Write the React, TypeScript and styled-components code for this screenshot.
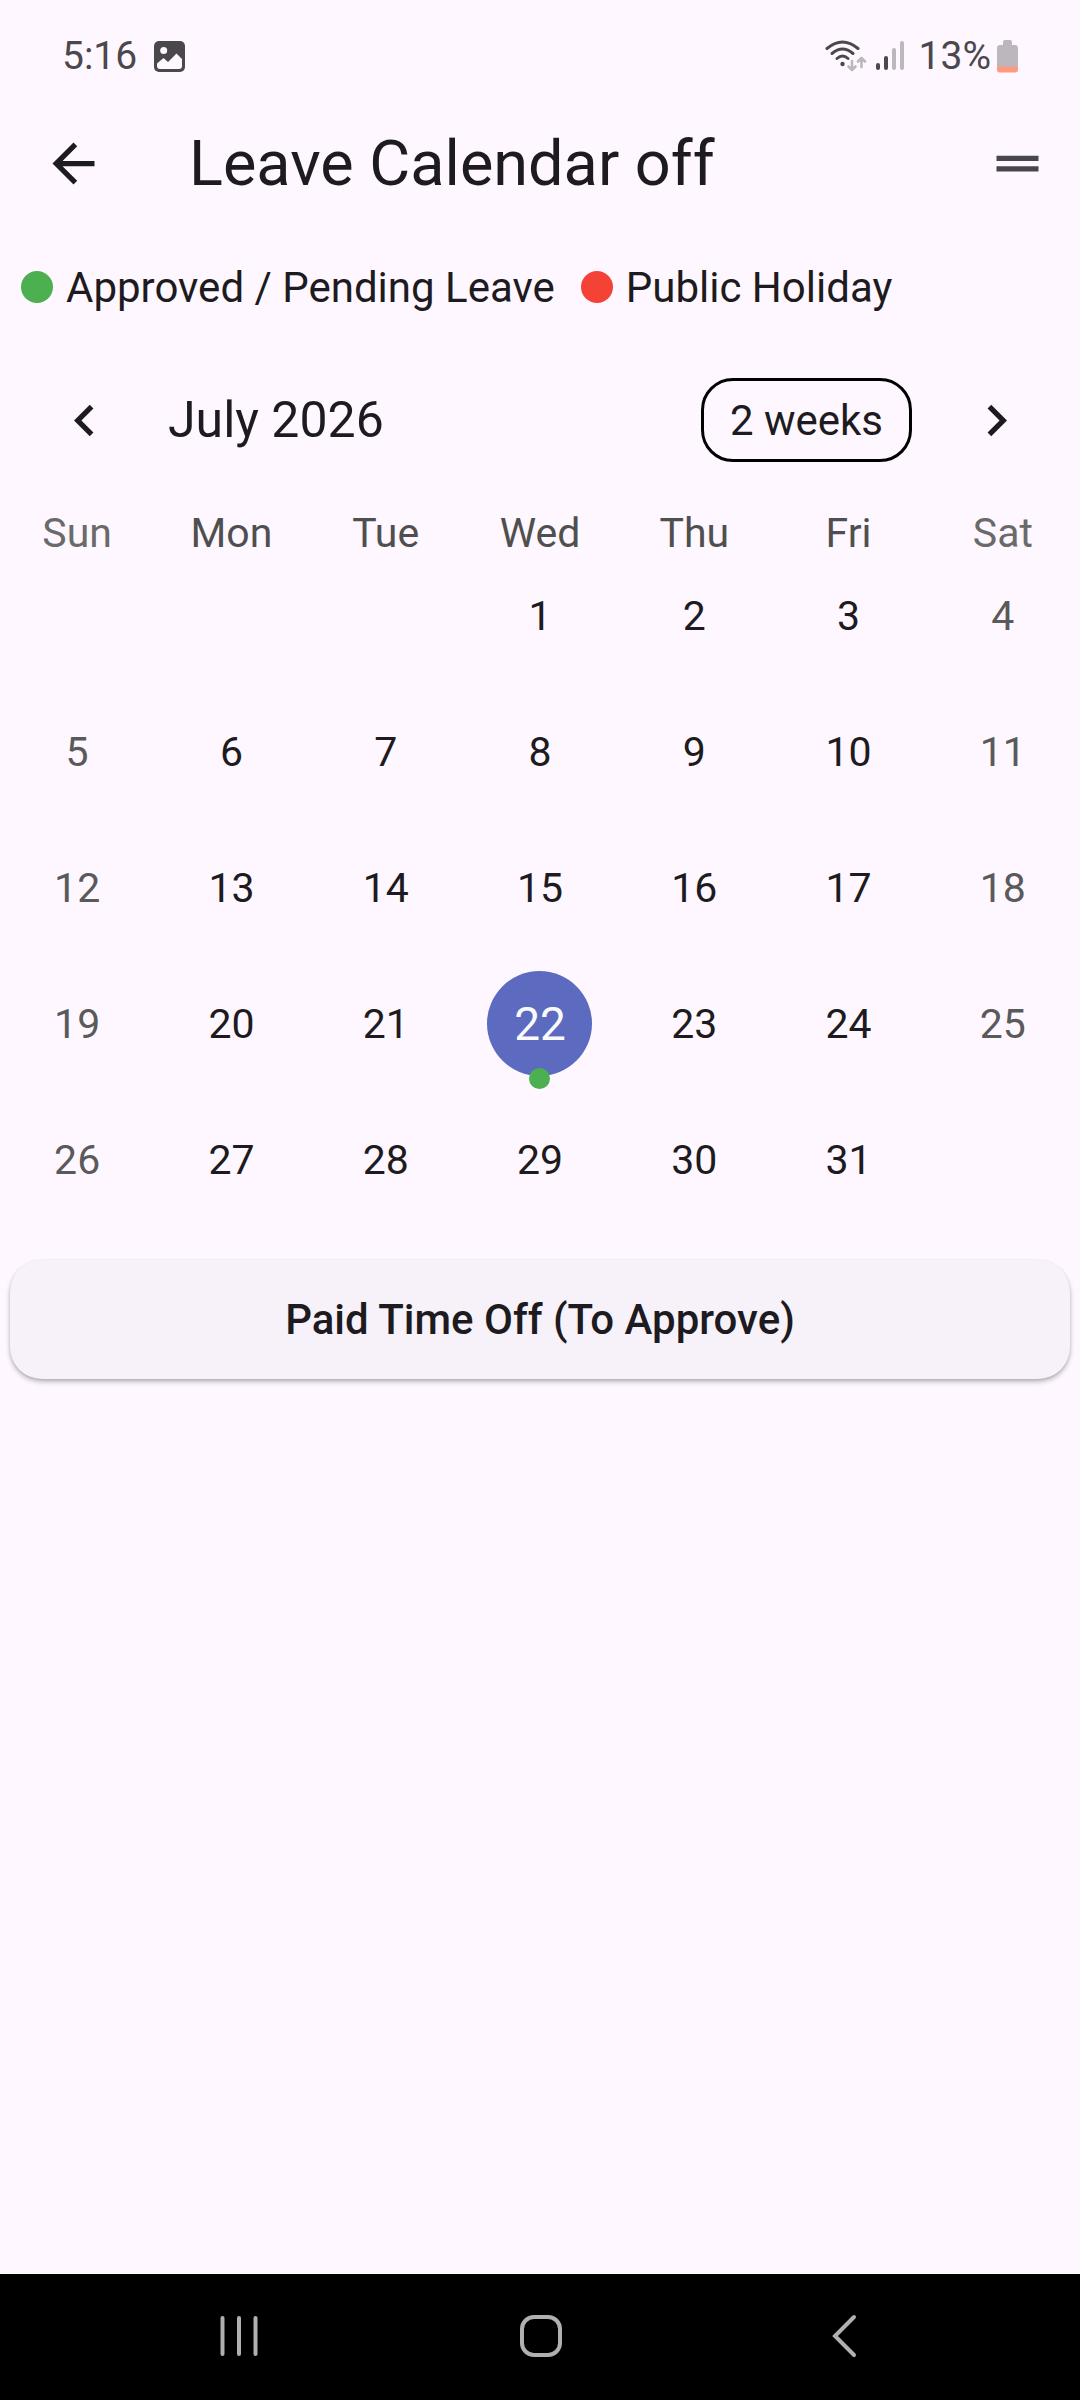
import React, { useState } from "react";
import styled, { createGlobalStyle } from "styled-components";

const color = {
  surface: "#fef7ff",
  ink: "#1d1b20",
  inkVariant: "#49454f",
  status: "#4b484c",
  statusFaint: "#bcb7bd",
  weekday: "#4f4f4f",
  weekendHead: "#6a6a6a",
  weekend: "#5a5a5a",
  selected: "#5c6bc0",
  leave: "#4caf50",
  holiday: "#f44336",
  card: "#f7f2fa",
};

const GlobalStyle = createGlobalStyle`
  *, *::before, *::after { box-sizing: border-box; }
  body {
    margin: 0;
    background: ${color.surface};
    color: ${color.ink};
    font-family: Roboto, "Liberation Sans", sans-serif;
    font-size: 42px;
  }
  button {
    margin: 0;
    padding: 0;
    border: 0;
    background: none;
    color: inherit;
    font: inherit;
    cursor: pointer;
  }
  svg { display: block; flex: none; }
`;

const Screen = styled.div`
  display: flex;
  flex-direction: column;
  min-height: 100vh;
`;

const StatusBar = styled.div`
  display: flex;
  align-items: center;
  justify-content: space-between;
  height: 90px;
  padding: 22px 62px 0;
  color: ${color.status};
  font-size: 39px;
`;

const StatusGroup = styled.div<{ $gap: number }>`
  display: flex;
  align-items: center;
  gap: ${(p) => p.$gap}px;
`;

const AppBar = styled.header`
  display: flex;
  align-items: center;
  height: 147px;
  padding-right: 31px;
`;

const IconButton = styled.button<{ $width: number }>`
  display: flex;
  align-items: center;
  justify-content: center;
  flex: none;
  width: ${(p) => p.$width}px;
  height: 126px;
`;

const Title = styled.h1`
  flex: 1;
  margin: 0;
  padding-left: 42px;
  font-size: 63px;
  font-weight: 400;
`;

const Legend = styled.ul`
  display: flex;
  align-items: center;
  gap: 26px;
  height: 100px;
  margin: 0;
  padding: 0 21px;
  list-style: none;
`;

const LegendItem = styled.li`
  display: flex;
  align-items: center;
  gap: 13px;
`;

const Dot = styled.span<{ $color: string }>`
  flex: none;
  width: 32px;
  height: 32px;
  border-radius: 50%;
  background: ${(p) => p.$color};
`;

const CalendarHeader = styled.div`
  display: flex;
  align-items: center;
  gap: 21px;
  height: 166px;
  padding: 0 21px;
`;

const Month = styled.h2`
  flex: 1;
  margin: 0;
  font-size: 50px;
  font-weight: 400;
`;

const FormatButton = styled.button`
  height: 84px;
  padding: 0 26px;
  border: 3px solid #000;
  border-radius: 32px;
`;

const Calendar = styled.table`
  width: 100%;
  table-layout: fixed;
  border-collapse: collapse;
  font-size: 41px;
`;

const Weekday = styled.th<{ $weekend: boolean }>`
  height: 60px;
  padding: 0;
  color: ${(p) => (p.$weekend ? color.weekendHead : color.weekday)};
  font-weight: 400;
  text-align: center;
`;

const DayCell = styled.td`
  height: 136px;
  padding: 0;
  vertical-align: top;
`;

const DayButton = styled.button<{ $weekend: boolean; $selected: boolean }>`
  position: relative;
  display: flex;
  align-items: center;
  justify-content: center;
  width: 105px;
  height: 105px;
  margin: 0 auto;
  border-radius: 50%;
  background: ${(p) => (p.$selected ? color.selected : "transparent")};
  color: ${(p) => (p.$selected ? "#fafafa" : p.$weekend ? color.weekend : color.ink)};
  font-size: ${(p) => (p.$selected ? 46 : 41)}px;
`;

const EventMarker = styled.span`
  position: absolute;
  bottom: -13px;
  left: 42px;
  width: 21px;
  height: 21px;
  border-radius: 50%;
  background: ${color.leave};
`;

const LeaveCard = styled.article`
  display: flex;
  align-items: center;
  justify-content: center;
  height: 119px;
  margin: 17px 10px 0;
  border-radius: 32px;
  background: ${color.card};
  box-shadow: 0 3px 5px rgba(0, 0, 0, 0.24), 0 1px 3px rgba(0, 0, 0, 0.12);
  font-weight: 500;
`;

const NavigationBar = styled.nav`
  display: flex;
  align-items: center;
  height: 126px;
  margin-top: auto;
  padding: 0 88px;
  background: #000;
`;

const NavButton = styled.button`
  display: flex;
  align-items: center;
  justify-content: center;
  flex: 1;
  height: 100%;
`;

const MaterialIcon = ({ path, fill = color.ink }: { path: string; fill?: string }) => (
  <svg width="63" height="63" viewBox="0 0 24 24" fill={fill} aria-hidden="true">
    <path d={path} />
  </svg>
);

const PictureIcon = () => (
  <svg width="31" height="31" viewBox="0 0 31 31" aria-hidden="true">
    <rect width="31" height="31" rx="5" fill={color.status} />
    <circle cx="9.700" cy="9.500" r="3.500" fill={color.surface} />
    <path d="M3 22.500 L9.500 17 L14 21 L22.500 12.500 L28 18 V25 Q28 28 25 28 H6 Q3 28 3 25 Z" fill={color.surface} />
  </svg>
);

const WifiIcon = () => (
  <svg width="42" height="32" viewBox="0 0 42 32" fill="none" strokeLinecap="round" aria-hidden="true">
    <g stroke={color.status} strokeWidth="3">
      <path d="M2 8.500 Q17.500 -4.500 33 8.500" />
      <path d="M7 13.500 Q17.500 4.500 28 13.500" />
      <path d="M12 18.500 Q17.500 13.500 23 18.500" />
    </g>
    <circle cx="17.500" cy="24" r="2.200" fill={color.status} />
    <g stroke={color.statusFaint} strokeWidth="2.600" strokeLinejoin="round">
      <path d="M27 21 V30 M23.500 26.500 L27 30 L30.500 26.500" />
      <path d="M36.500 27 V18 M33 21.500 L36.500 18 L40 21.500" />
    </g>
  </svg>
);

const SignalIcon = () => (
  <svg width="28" height="30" viewBox="0 0 28 30" aria-hidden="true">
    <rect x="0" y="22" width="4" height="7" rx="2" fill={color.status} />
    <rect x="8" y="15" width="4" height="14" rx="2" fill={color.status} />
    <rect x="16" y="7" width="4" height="22" rx="2" fill={color.statusFaint} />
    <rect x="24" y="0" width="4" height="29" rx="2" fill={color.statusFaint} />
  </svg>
);

const BatteryIcon = () => (
  <svg width="21" height="33" viewBox="0 0 21 33" aria-hidden="true">
    <path d="M6 5 V2 Q6 0 8 0 H13 Q15 0 15 2 V5 H18 Q21 5 21 8 V27 H0 V8 Q0 5 3 5 Z" fill={color.statusFaint} />
    <path d="M0 26.500 H21 V29.500 Q21 32.500 18 32.500 H3 Q0 32.500 0 29.500 Z" fill="#fd9a80" />
  </svg>
);

const WEEKDAYS = ["Sun", "Mon", "Tue", "Wed", "Thu", "Fri", "Sat"];
const FIRST_WEEKDAY = 3;
const DAYS_IN_MONTH = 31;
const LEAVE_DAY = 22;

const weeks = Array.from({ length: 5 }, (_, week) =>
  Array.from({ length: 7 }, (_, column) => {
    const day = week * 7 + column - FIRST_WEEKDAY + 1;
    return day >= 1 && day <= DAYS_IN_MONTH ? day : null;
  })
);

const isWeekend = (column: number) => column === 0 || column === 6;

export default function App() {
  const [selected, setSelected] = useState(LEAVE_DAY);

  return (
    <>
      <GlobalStyle />
      <Screen>
        <StatusBar>
          <StatusGroup $gap={17}>
            <span>5:16</span>
            <PictureIcon />
          </StatusGroup>
          <StatusGroup $gap={15}>
            <StatusGroup $gap={9}>
              <WifiIcon />
              <SignalIcon />
            </StatusGroup>
            <StatusGroup $gap={6}>
              <span>13%</span>
              <BatteryIcon />
            </StatusGroup>
          </StatusGroup>
        </StatusBar>

        <AppBar>
          <IconButton $width={147} aria-label="Back">
            <MaterialIcon path="M20 11H7.830l5.590-5.590L12 4l-8 8 8 8 1.410-1.410L7.830 13H20v-2z" />
          </IconButton>
          <Title>Leave Calendar off</Title>
          <IconButton $width={63} aria-label="Menu">
            <MaterialIcon path="M20 9H4v2h16V9zM4 15h16v-2H4v2z" fill={color.inkVariant} />
          </IconButton>
        </AppBar>

        <main>
          <Legend>
            <LegendItem>
              <Dot $color={color.leave} />
              Approved / Pending Leave
            </LegendItem>
            <LegendItem>
              <Dot $color={color.holiday} />
              Public Holiday
            </LegendItem>
          </Legend>

          <CalendarHeader>
            <IconButton $width={126} aria-label="Previous month">
              <MaterialIcon path="M15.410 7.410L14 6l-6 6 6 6 1.410-1.410L10.830 12z" />
            </IconButton>
            <Month>July 2026</Month>
            <FormatButton>2 weeks</FormatButton>
            <IconButton $width={126} aria-label="Next month">
              <MaterialIcon path="M10 6L8.590 7.410 13.170 12l-4.580 4.590L10 18l6-6z" />
            </IconButton>
          </CalendarHeader>

          <Calendar>
            <thead>
              <tr>
                {WEEKDAYS.map((name, column) => (
                  <Weekday key={name} scope="col" $weekend={isWeekend(column)}>
                    {name}
                  </Weekday>
                ))}
              </tr>
            </thead>
            <tbody>
              {weeks.map((week, row) => (
                <tr key={row}>
                  {week.map((day, column) => (
                    <DayCell key={column}>
                      {day !== null && (
                        <DayButton
                          $weekend={isWeekend(column)}
                          $selected={day === selected}
                          aria-pressed={day === selected}
                          onClick={() => setSelected(day)}
                        >
                          {day}
                          {day === LEAVE_DAY && <EventMarker />}
                        </DayButton>
                      )}
                    </DayCell>
                  ))}
                </tr>
              ))}
            </tbody>
          </Calendar>

          <LeaveCard>Paid Time Off (To Approve)</LeaveCard>
        </main>

        <NavigationBar>
          <NavButton aria-label="Recent apps">
            <svg width="64" height="48" viewBox="0 0 64 48" stroke="#b0b0b0" strokeWidth="4" strokeLinecap="round" aria-hidden="true">
              <path d="M15.500 5 V41 M32 5 V41 M48.500 5 V41" />
            </svg>
          </NavButton>
          <NavButton aria-label="Home">
            <svg width="64" height="48" viewBox="0 0 64 48" fill="none" stroke="#b0b0b0" strokeWidth="4" aria-hidden="true">
              <rect x="14" y="4" width="38" height="38" rx="12" />
            </svg>
          </NavButton>
          <NavButton aria-label="Go back">
            <svg width="64" height="48" viewBox="0 0 64 48" fill="none" stroke="#b0b0b0" strokeWidth="4" strokeLinecap="round" aria-hidden="true">
              <path d="M45 4 L26 23 L45 42" />
            </svg>
          </NavButton>
        </NavigationBar>
      </Screen>
    </>
  );
}
